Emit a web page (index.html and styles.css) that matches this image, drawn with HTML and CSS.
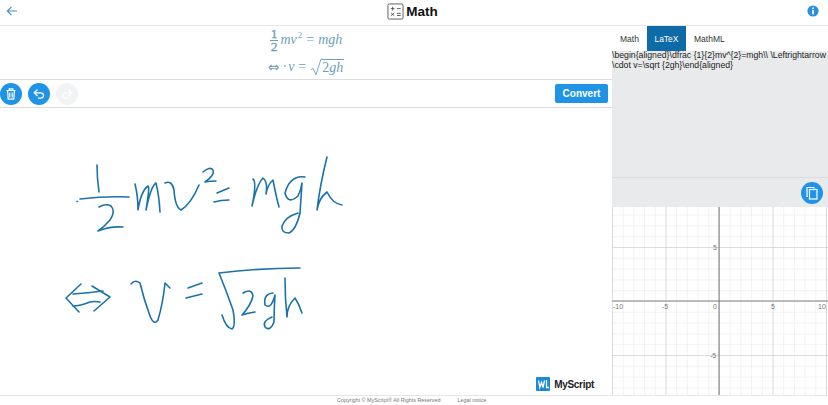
FILE: index.html
```html
<!DOCTYPE html>
<html lang="en">
<head>
  <meta charset="UTF-8" />
  <title>Math</title>
  <link rel="stylesheet" href="styles.css">
</head>
<body>
  <!-- Header -->
  <header class="topbar">
    <svg class="back" width="12" height="12" viewBox="0 0 12 12"><path d="M11 6H1.5M5.5 1.8L1.3 6l4.2 4.2" /></svg>
    <div class="title">
      <svg class="title-icon" width="17" height="17" viewBox="0 0 18 18">
        <rect x="1" y="1" width="16" height="16" rx="1.5" />
        <path d="M4 6h4M6 4v4M10.500 6h4M4.300 10.500l3.400 3M7.700 10.500l-3.400 3M10.500 11h4M10.500 13.200h4" />
      </svg>
      <span>Math</span>
    </div>
    <svg class="info" width="12" height="12" viewBox="0 0 12 12">
      <circle cx="6" cy="6" r="5.600" />
      <rect x="5.200" y="2.400" width="1.600" height="1.600" />
      <rect x="5.200" y="5" width="1.600" height="4.400" />
    </svg>
  </header>

  <div class="main">
    <div class="editor">
      <!-- Result -->
      <div class="result">
        <div class="math-row">
          <span class="frac"><span class="num">1</span><span class="den">2</span></span>
          <i>mv</i><sup>2</sup><span class="eq">=</span><i>mgh</i>
        </div>
        <div class="math-row">
          <span class="arrow">⇔</span><span class="dot">·</span><i>v</i><span class="eq">=</span>
          <span class="root"><svg width="12" height="18" viewBox="0 0 12 17"><path d="M1 11l2-1 3 6 5-15.500h1" /></svg><span class="radicand">2<i>gh</i></span></span>
        </div>
      </div>

      <!-- Toolbar -->
      <div class="toolbar">
        <button class="round">
          <svg width="14" height="14" viewBox="0 0 14 14"><path d="M2.500 3.500h9M5.200 3.300V1.800h3.600v1.500M3.600 3.800l.6 8.400h5.600l.6-8.400M5.800 5.500v5M8.200 5.500v5" /></svg>
        </button>
        <button class="round">
          <svg width="14" height="14" viewBox="0 0 14 14"><path d="M5.500 2.500L2.200 5.800l3.300 3.200M2.500 5.800h6c4 0 4 5.400 0 5.400H6" /></svg>
        </button>
        <button class="round off">
          <svg width="14" height="14" viewBox="0 0 14 14"><path d="M8.500 2.500l3.300 3.300L8.500 9M11.500 5.800h-6c-4 0-4 5.400 0 5.400H8" /></svg>
        </button>
        <button class="convert">Convert</button>
      </div>

      <!-- Ink -->
      <div class="canvas">
        <svg class="ink" width="612" height="287" viewBox="0 108 612 287">
          <path d="M77 201.500h.6" />
          <path d="M97 165Q97 178 99 192" />
          <path d="M80 199Q105 196 129 197" />
          <path d="M99 207Q106 203 111 206Q116 211 110 220Q104 227 98 231Q110 226 123 227" />
          <path d="M135 184Q138 196 138 210Q141 191 148 186Q150 186 146 210Q151 186 156 183Q159 195 160 212" />
          <path d="M165 183Q172 180 174 190Q175 207 181 210Q191 204 199 185" />
          <path d="M203 172Q210 166 213 170Q215 175 205 182Q210 181 216 181" />
          <path d="M217 193L229 188M214 202Q221 200 229 200" />
          <path d="M253 179Q257 182 252 206Q257 184 263 178Q268 182 266 194Q268 184 273 180Q276 196 279 207" />
          <path d="M305 177Q290 175 285 193Q288 205 298 196Q301 190 302 183Q301 198 300 213Q296 230 289 233Q281 233 282 226Q285 217 298 213" />
          <path d="M327 157Q320 185 317 210Q319 198 327 192Q333 204 342 205" />
          <path d="M81 284L66 298L79 312M92 286L110 297L94 311" />
          <path d="M73 294Q88 293 103 291M73 306Q80 306 90 302Q95 301 100 302" />
          <path d="M131 284Q135 279 140 283Q144 300 150 316Q154 326 158 320Q163 303 165 283L170 288" />
          <path d="M188 288L202 283M186 298L202 294" />
          <path d="M222 315Q226 328 232 329Q236 326 233 310Q226 290 219 273Q260 268 300 268" />
          <path d="M243 293Q252 288 253 296Q251 305 242 315Q248 313 255 312" />
          <path d="M273 293Q263 294 265 305Q271 310 275 295Q274 310 274 322Q270 332 265 327Q262 321 272 317" />
          <path d="M285 278Q285 298 287 317Q287 306 295 298Q299 304 302 313" />
        </svg>
        <div class="logo">
          <svg width="14" height="14" viewBox="0 0 14 14">
            <rect width="14" height="14" rx="1" />
            <path d="M2.500 3.500l1.300 7 1.700-5 1.500 5 1.500-7M10.500 3v7.500H13" />
          </svg>
          <span>MyScript</span>
        </div>
      </div>
    </div>

    <div class="side">
      <div class="tabs">
        <span class="tab">Math</span>
        <span class="tab active">LaTeX</span>
        <span class="tab">MathML</span>
      </div>
      <div class="latex">\begin{aligned}\dfrac {1}{2}mv^{2}=mgh\\ \Leftrightarrow \cdot v=\sqrt {2gh}\end{aligned}</div>
      <div class="copy-bar">
        <button class="round">
          <svg width="14" height="14" viewBox="0 0 14 14"><path d="M3 10.500H2V1.500h7v1" /><rect class="page" x="4.500" y="3.500" width="7.500" height="9.500" /></svg>
        </button>
      </div>

      <!-- Graph -->
      <svg class="graph" width="216" height="188" viewBox="0 0 216 188">
        <defs>
          <pattern id="minor" width="10.700" height="10.800" patternUnits="userSpaceOnUse" patternTransform="translate(107 94)">
            <path d="M0 0V10.800M0 0H10.700" />
          </pattern>
          <pattern id="major" width="53.500" height="54" patternUnits="userSpaceOnUse" patternTransform="translate(107 94)">
            <path d="M0 0V54M0 0H53.500" />
          </pattern>
        </defs>
        <rect width="216" height="188" fill="url(#minor)" />
        <rect width="216" height="188" fill="url(#major)" />
        <path class="axis-x" d="M0 94H216" />
        <path class="axis-y" d="M107 0V188" />
        <text x="1" y="101.500">-10</text>
        <text x="50" y="101.500">-5</text>
        <text x="101" y="101.500">0</text>
        <text x="159" y="101.500">5</text>
        <text x="206" y="101.500">10</text>
        <text x="101" y="42.500">5</text>
        <text x="98" y="150.500">-5</text>
      </svg>
    </div>
  </div>

  <footer class="footer">
    <span>Copyright © MyScript® All Rights Reserved</span>
    <span>Legal notice</span>
  </footer>
</body>
</html>
```

FILE: styles.css
```css
* {
  box-sizing: border-box;
}

body {
  margin: 0;
  width: 828px;
  height: 405px;
  overflow: hidden;
  background: #fff;
  font-family: "Liberation Sans", Arial, sans-serif;
  color: #222;
  display: flex;
  flex-direction: column;
}

.topbar {
  height: 26px;
  flex: none;
  border-bottom: 1px solid #e6e6e6;
  display: flex;
  align-items: center;
  justify-content: space-between;
  padding: 0 9px 3px 6px;
}

.back path {
  fill: none;
  stroke: #3f8fc9;
  stroke-width: 1.100;
}

.title {
  display: flex;
  align-items: center;
  gap: 2px;
  font-size: 13.500px;
  font-weight: bold;
  color: #111;
}

.title-icon rect,
.title-icon path {
  fill: none;
  stroke: #444;
  stroke-width: 0.900;
}

.info circle {
  fill: #2a8fd8;
}

.info rect {
  fill: #fff;
}

.main {
  display: flex;
  height: 369px;
  flex: none;
}

.editor {
  width: 612px;
  display: flex;
  flex-direction: column;
}

/* Resultat */
.result {
  height: 54px;
  flex: none;
  border-bottom: 1px solid #dcdcdc;
  display: flex;
  flex-direction: column;
  align-items: center;
  font-family: "Liberation Serif", serif;
  font-size: 14px;
  color: #6d9fbb;
}

.math-row {
  display: flex;
  align-items: center;
  height: 25px;
}

.math-row:first-child {
  height: 28px;
}

.math-row sup {
  font-size: 9px;
  align-self: flex-start;
  margin: 5px 0 0 1px;
  line-height: 8px;
}

.frac {
  display: flex;
  flex-direction: column;
  align-items: center;
  margin-right: 2px;
  line-height: 12px;
  font-size: 13.500px;
  -webkit-text-stroke: 0.300px #6d9fbb;
}

.num {
  border-bottom: 1px solid #6d9fbb;
  padding: 0 1px 0;
}

.eq {
  margin: 0 4px;
}

.arrow {
  font-family: "DejaVu Sans", sans-serif;
  font-size: 14px;
  margin-right: 3px;
}

.dot {
  margin-right: 1px;
}

.root {
  display: flex;
  align-items: flex-end;
}

.root svg path {
  fill: none;
  stroke: #6d9fbb;
  stroke-width: 0.900;
}

.radicand {
  border-top: 1px solid #6d9fbb;
  line-height: 16px;
  padding-right: 1px;
}

/* Barra strumenti */
.toolbar {
  height: 28px;
  flex: none;
  border-bottom: 1px solid #dcdcdc;
  display: flex;
  align-items: center;
  gap: 6px;
  padding: 0 4px 0 0;
}

.round {
  width: 22px;
  height: 22px;
  border: 0;
  border-radius: 50%;
  padding: 0;
  background: #1f93e6;
  display: flex;
  align-items: center;
  justify-content: center;
}

.round svg path,
.round svg rect {
  fill: none;
  stroke: #fff;
  stroke-width: 1.200;
}

.round.off {
  background: #f2f3f4;
}

.convert {
  margin-left: auto;
  width: 53px;
  height: 19px;
  border: 0;
  border-radius: 2px;
  padding: 0;
  background: #1f93e6;
  color: #fff;
  font-family: inherit;
  font-size: 10px;
  font-weight: bold;
}

/* Inchiostro */
.canvas {
  flex: 1;
  position: relative;
}

.ink {
  display: block;
}

.ink path {
  fill: none;
  stroke: #1a72ab;
  stroke-width: 1.600;
  stroke-linecap: round;
  stroke-linejoin: round;
}

.logo {
  position: absolute;
  right: 18px;
  bottom: 4px;
  display: flex;
  align-items: center;
  gap: 4px;
  font-size: 10px;
  font-weight: bold;
  letter-spacing: -0.300px;
  color: #222;
}

.logo rect {
  fill: #1c8ad2;
}

.logo path {
  fill: none;
  stroke: #fff;
  stroke-width: 1.300;
}

/* Pannello destro */
.side {
  width: 216px;
  display: flex;
  flex-direction: column;
}

.tabs {
  height: 25px;
  flex: none;
  display: flex;
  font-size: 8.500px;
}

.tab {
  padding: 0 8px;
  display: flex;
  align-items: center;
  color: #333;
}

.tab.active {
  padding: 0 7.500px;
  background: #0f6aa8;
  color: #fff;
}

.latex {
  height: 127px;
  flex: none;
  background: #e9eaec;
  border-bottom: 1px solid #dcdddf;
  font-size: 8.700px;
  line-height: 9.500px;
  color: #222;
}

.copy-bar {
  height: 29px;
  flex: none;
  background: #e9eaec;
  display: flex;
  justify-content: flex-end;
  align-items: center;
  padding-right: 5px;
}

.graph {
  display: block;
}

#minor path {
  fill: none;
  stroke: #e6e6e6;
  stroke-width: 1;
}

#major path {
  fill: none;
  stroke: #c6c6c6;
  stroke-width: 1;
}

.axis-x {
  stroke: #aaa;
  stroke-width: 1.500;
}

.axis-y {
  stroke: #777;
  stroke-width: 1;
}

.graph text {
  font-size: 7px;
  fill: #777;
}

.footer {
  height: 10px;
  flex: none;
  border-top: 1px solid #e6e6e6;
  display: flex;
  gap: 17px;
  padding-left: 337px;
  font-size: 5.400px;
  line-height: 9px;
  color: #777;
}
```
